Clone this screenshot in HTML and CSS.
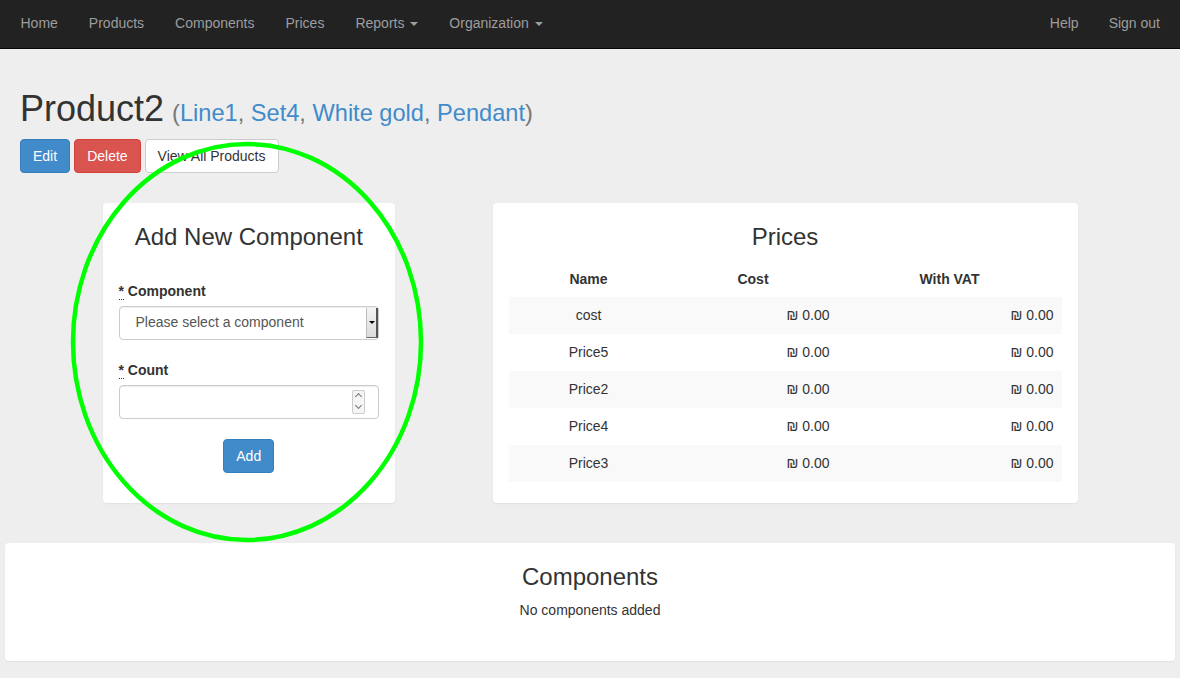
FILE: index.html
```html
<!DOCTYPE html>
<html>
<head>
<meta charset="utf-8">
<link rel="stylesheet" href="styles.css">
</head>
<body>
<nav class="navbar">
  <ul class="nav">
    <li><a href="#">Home</a></li>
    <li><a href="#">Products</a></li>
    <li><a href="#">Components</a></li>
    <li><a href="#">Prices</a></li>
    <li><a href="#">Reports <span class="caret"></span></a></li>
    <li><a href="#">Organization <span class="caret"></span></a></li>
  </ul>
  <ul class="nav nav-right">
    <li><a href="#">Help</a></li>
    <li><a href="#">Sign out</a></li>
  </ul>
</nav>

<main class="page">
  <header class="head">
    <h1 class="title">Product2 <small>(<a href="#">Line1</a>, <a href="#">Set4</a>, <a href="#">White gold</a>, <a href="#">Pendant</a>)</small></h1>
    <div class="actions">
      <button class="btn btn-primary">Edit</button>
      <button class="btn btn-danger">Delete</button>
      <button class="btn btn-default">View All Products</button>
    </div>
  </header>

  <div class="row">
    <section class="card card-form">
      <h3 class="card-title">Add New Component</h3>
      <div class="field">
        <label class="label"><abbr>*</abbr> Component</label>
        <div class="select">
          <span class="select-text">Please select a component</span>
          <span class="select-btn"><span class="mini-caret"></span></span>
        </div>
      </div>
      <div class="field">
        <label class="label"><abbr>*</abbr> Count</label>
        <div class="input">
          <span class="spin"><span class="spin-up"></span><span class="spin-down"></span></span>
        </div>
      </div>
      <div class="submit">
        <button class="btn btn-primary">Add</button>
      </div>
    </section>

    <section class="card card-prices">
      <h3 class="card-title">Prices</h3>
      <table class="table">
        <thead>
          <tr><th class="c1">Name</th><th class="c2">Cost</th><th class="c3">With VAT</th></tr>
        </thead>
        <tbody>
          <tr><td class="name">cost</td><td class="num">₪ 0.00</td><td class="num">₪ 0.00</td></tr>
          <tr><td class="name">Price5</td><td class="num">₪ 0.00</td><td class="num">₪ 0.00</td></tr>
          <tr><td class="name">Price2</td><td class="num">₪ 0.00</td><td class="num">₪ 0.00</td></tr>
          <tr><td class="name">Price4</td><td class="num">₪ 0.00</td><td class="num">₪ 0.00</td></tr>
          <tr><td class="name">Price3</td><td class="num">₪ 0.00</td><td class="num">₪ 0.00</td></tr>
        </tbody>
      </table>
    </section>
  </div>

  <section class="card card-components">
    <h3 class="card-title">Components</h3>
    <p class="empty">No components added</p>
  </section>
</main>

<svg class="annotation" width="356" height="404" viewBox="0 0 356 404">
  <ellipse cx="178" cy="202" rx="174" ry="198" fill="none" stroke="#00ff00" stroke-width="4.5"/>
</svg>
</body>
</html>
```

FILE: styles.css
```css
* { box-sizing: border-box; }
html, body { margin: 0; padding: 0; }
body {
  background: #eeeeee;
  font-family: "Liberation Sans", Arial, sans-serif;
  font-size: 14px;
  line-height: 1.428571;
  color: #333;
  width: 1180px;
  height: 678px;
  overflow: hidden;
  position: relative;
}
a { color: #428bca; text-decoration: none; }

.navbar {
  height: 49px;
  background: #222;
  border-bottom: 1px solid #080808;
  display: flex;
  justify-content: space-between;
  padding: 0 5px;
}
.nav { list-style: none; margin: 0; padding: 0; display: flex; }
.nav a {
  display: block;
  color: #9d9d9d;
  padding: 13px 15.5px 15px;
  line-height: 20px;
  font-size: 14px;
}
.nav-right a { padding: 13px 15px 15px; }
.caret {
  display: inline-block;
  width: 0; height: 0;
  margin-left: 2px;
  vertical-align: middle;
  border-top: 4px solid #9d9d9d;
  border-left: 4px solid transparent;
  border-right: 4px solid transparent;
}

.page { padding: 0 5px; }
.head { padding: 0 15px; }
.title {
  margin: 40px 0 10px;
  font-size: 36px;
  font-weight: 500;
  line-height: 1.1;
  color: #333;
}
.title small { font-size: 23.6px; color: #777; font-weight: normal; margin-left: -2px; }
.actions { display: flex; gap: 4px; }

.btn {
  font-family: inherit;
  font-size: 14px;
  line-height: 20px;
  padding: 6px 12px;
  border: 1px solid transparent;
  border-radius: 4px;
  height: 34px;
  cursor: pointer;
}
.btn-primary { background: #428bca; border-color: #357ebd; color: #fff; }
.btn-danger { background: #d9534f; border-color: #d43f3a; color: #fff; }
.btn-default { background: #fff; border-color: #ccc; color: #333; }

.row {
  display: grid;
  grid-template-columns: repeat(12, 1fr);
  width: 1170px;
  margin-top: 30px;
}
.card {
  background: #fff;
  border-radius: 4px;
  box-shadow: 0 1px 2px rgba(0,0,0,0.06);
}
.card-title {
  margin: 0;
  font-size: 24px;
  font-weight: 500;
  line-height: 1.1;
  text-align: center;
}
.card-form {
  grid-column: 2 / 5;
  height: 300px;
  padding: 21px 16px 16px;
}
.card-prices {
  grid-column: 6 / 12;
  height: 300px;
  padding: 21px 16px 16px;
}

.field { margin-top: 20px; }
.card-form .field:first-of-type { margin-top: 31px; }
.label {
  display: block;
  font-weight: bold;
  margin-bottom: 5px;
  line-height: 20px;
}
abbr { border-bottom: 1px dotted #333; text-decoration: none; }

.select {
  height: 34px;
  border: 1px solid #ccc;
  border-radius: 4px;
  display: flex;
  align-items: center;
  justify-content: space-between;
  box-shadow: inset 0 1px 1px rgba(0,0,0,0.075);
}
.select-text { color: #555; padding-left: 16px; }
.select-btn {
  width: 12px;
  height: 30px;
  background: linear-gradient(#f4f4f4, #dcdcdc);
  border-left: 1px solid #bbb;
  border-right: 2px solid #555;
  border-bottom: 1px solid #666;
  display: flex;
  align-items: center;
  justify-content: center;
}
.mini-caret {
  width: 0; height: 0;
  border-top: 3px solid #000;
  border-left: 3px solid transparent;
  border-right: 3px solid transparent;
}

.input {
  height: 34px;
  border: 1px solid #ccc;
  border-radius: 4px;
  display: flex;
  align-items: center;
  justify-content: flex-end;
  padding-right: 13px;
  box-shadow: inset 0 1px 1px rgba(0,0,0,0.075);
}
.spin {
  width: 13px;
  height: 24px;
  border: 1px solid #ccc;
  border-radius: 2px;
  display: flex;
  flex-direction: column;
  background: #f5f5f5;
}
.spin-up, .spin-down { flex: 1; position: relative; }
.spin-up::after, .spin-down::after {
  content: "";
  position: absolute;
  left: 3px; top: 3px;
  width: 4px; height: 4px;
  border-left: 1px solid #777;
  border-top: 1px solid #777;
  transform: rotate(45deg);
}
.spin-down::after { top: 1px; transform: rotate(225deg); }

.submit { text-align: center; margin-top: 20px; }

.table {
  width: 100%;
  border-collapse: collapse;
  margin-top: 11px;
}
.table th {
  font-weight: bold;
  text-align: center;
  padding: 8px;
  line-height: 20px;
}
.table td {
  padding: 8px;
  line-height: 21px;
}
.table tbody tr:nth-child(odd) { background: #f9f9f9; }
.c1 { width: 160px; }
.c2 { width: 169px; }
.name { text-align: center; }
.num { text-align: right; }

.card-components {
  margin-top: 40px;
  height: 118px;
  padding: 21px 15px 15px;
  text-align: center;
}
.empty { margin: 11px 0 0; }

.annotation {
  position: absolute;
  left: 69px;
  top: 140px;
  pointer-events: none;
}
```
